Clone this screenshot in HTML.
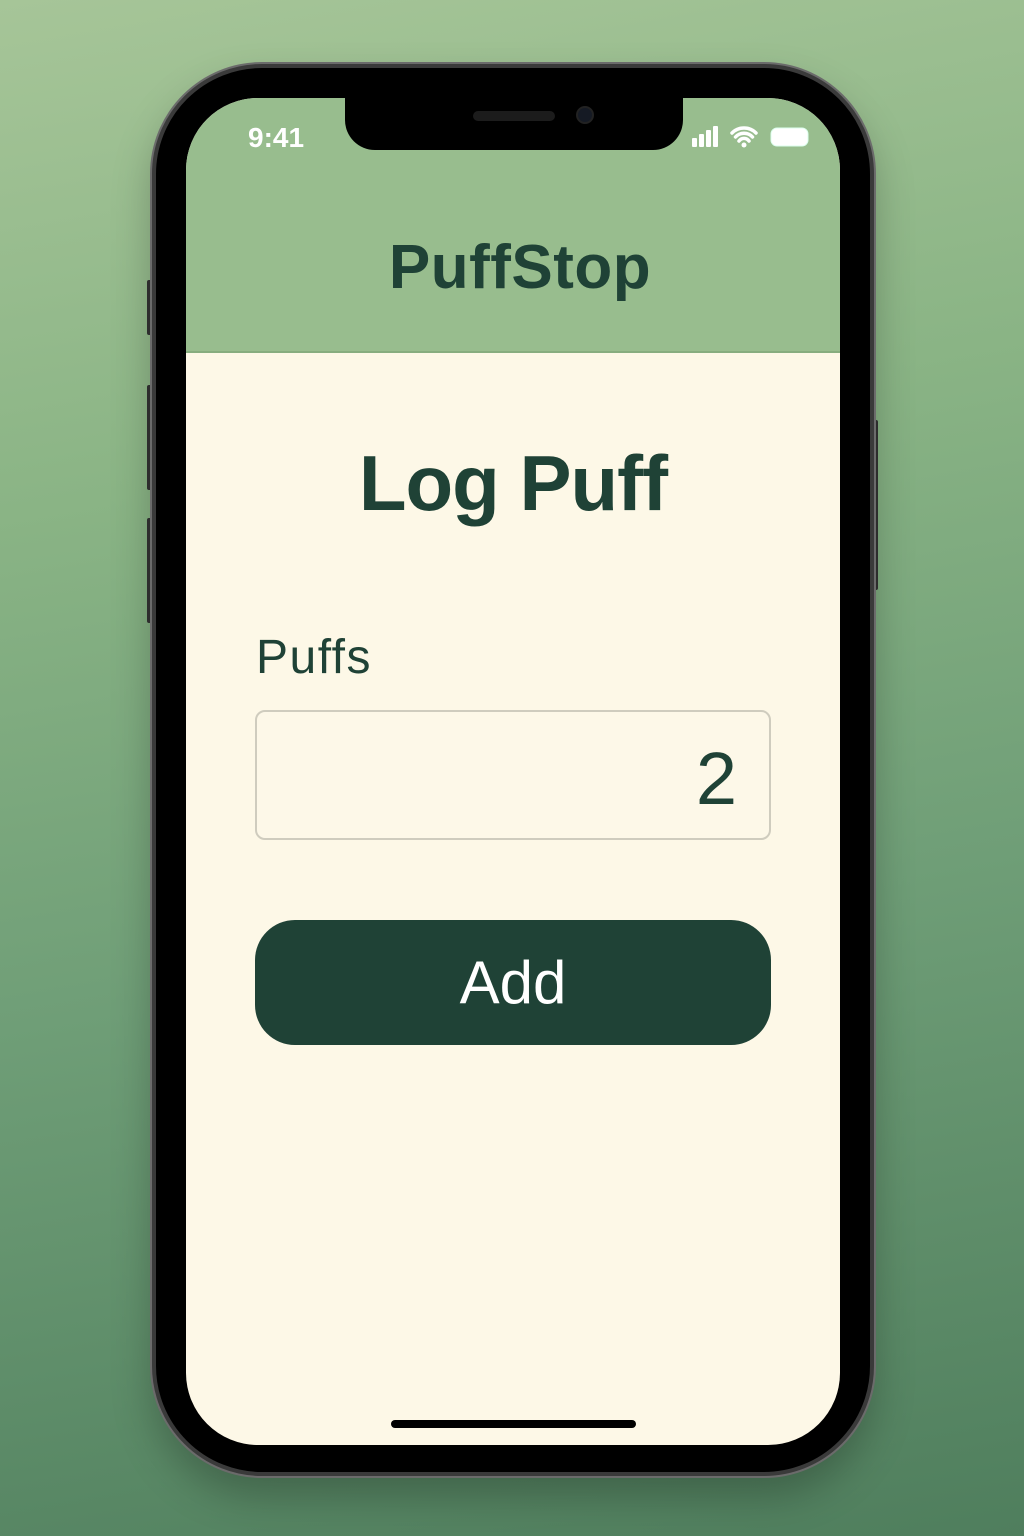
<!DOCTYPE html>
<html><head><style>
*{margin:0;padding:0;box-sizing:border-box}
body{width:1024px;height:1536px;overflow:hidden;position:relative;font-family:"Liberation Sans",sans-serif;
background:linear-gradient(170deg,#a6c598 0%,#8ab485 30%,#6f9e77 60%,#4f7e5d 100%)}
.phone{position:absolute;left:152px;top:64px;width:722px;height:1412px;border-radius:110px;background:#000;
border:4px solid #3a3a3a;box-shadow:0 0 0 2px #6b6b6b,0 20px 40px rgba(0,0,0,.25)}
.btn{position:absolute;width:5px;background:#333;border-radius:2px}
.screen{position:absolute;left:186px;top:98px;width:654px;height:1347px;border-radius:72px;overflow:hidden;background:#fdf8e7}
.head{position:absolute;left:0;top:0;width:654px;height:255px;background:#98bd8e;border-bottom:2px solid #87ad7f}
.notch{position:absolute;left:345px;top:98px;width:338px;height:52px;background:#000;border-radius:0 0 30px 30px}
.t{position:absolute;color:#1f4236}
</style></head><body>
<div class="btn" style="left:147px;top:280px;height:55px"></div>
<div class="btn" style="left:147px;top:385px;height:105px"></div>
<div class="btn" style="left:147px;top:518px;height:105px"></div>
<div class="btn" style="left:873px;top:420px;height:170px"></div>
<div class="phone"></div>
<div class="screen">
 <div class="head"></div>
 <div class="t" style="left:62px;top:24px;color:#fff;font-size:28px;font-weight:600">9:41</div>
 <svg style="position:absolute;left:505px;top:26px" width="120" height="26">
  <rect x="1" y="14" width="5" height="9" rx="1" fill="#fff"/><rect x="8" y="10" width="5" height="13" rx="1" fill="#fff"/><rect x="15" y="6" width="5" height="17" rx="1" fill="#fff"/><rect x="22" y="2" width="5" height="21" rx="1" fill="#fff"/>
  <path d="M41 9a17 17 0 0 1 24 0M44.5 13a11.5 11.5 0 0 1 17 0M48 17a6 6 0 0 1 10 0" stroke="#fff" stroke-width="3.5" fill="none" stroke-linecap="round"/><circle cx="53" cy="21" r="2.5" fill="#fff"/>
  <rect x="80" y="4" width="37" height="18" rx="6" fill="#fff" stroke="#dfe" stroke-width="1"/>
 </svg>
 <div class="t" style="left:0;width:668px;text-align:center;top:134px;font-size:62px;font-weight:700;letter-spacing:0.5px">PuffStop</div>
 <div class="t" style="left:0;width:654px;text-align:center;top:340px;font-size:78px;font-weight:700;letter-spacing:-1px">Log Puff</div>
 <div class="t" style="left:70px;top:532px;font-size:48px;letter-spacing:1.5px">Puffs</div>
 <div style="position:absolute;left:69px;top:612px;width:516px;height:130px;border:2px solid #cfccbe;border-radius:10px;background:#fdf8e8"></div>
 <div class="t" style="left:69px;width:482px;text-align:right;top:638px;font-size:74px">2</div>
 <div style="position:absolute;left:69px;top:822px;width:516px;height:125px;border-radius:40px;background:#1f4236;color:#fff;font-size:60px;text-align:center;line-height:125px">Add</div>
 <div style="position:absolute;left:205px;top:1322px;width:245px;height:8px;border-radius:4px;background:#000"></div>
</div>
<div class="notch"></div>
<div style="position:absolute;left:473px;top:111px;width:82px;height:10px;border-radius:5px;background:#1c1c1c"></div>
<div style="position:absolute;left:576px;top:106px;width:18px;height:18px;border-radius:50%;background:#151a24;border:2px solid #222"></div>
</body></html>
